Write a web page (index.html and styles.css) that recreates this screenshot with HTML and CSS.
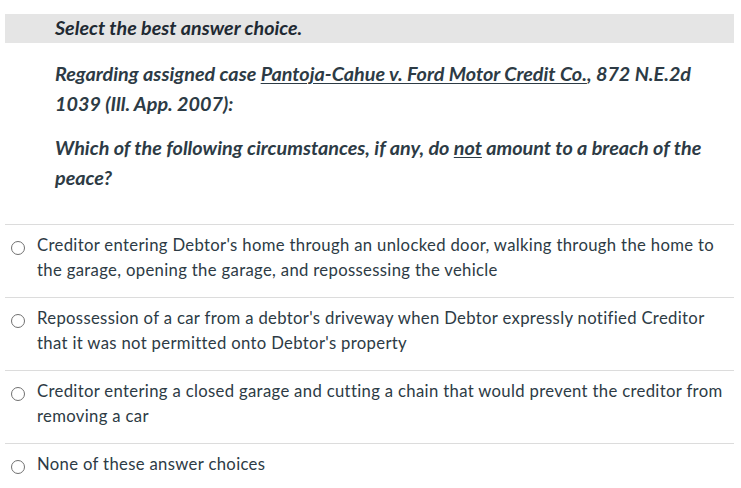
FILE: index.html
```html
<!DOCTYPE html>
<html lang="en">
<head>
<meta charset="utf-8">
<title>Question</title>
<link rel="stylesheet" href="styles.css">
</head>
<body>
<div class="page">
  <div class="instruction">Select the best answer choice.</div>
  <div class="question">
    <p>Regarding assigned case <u>Pantoja-Cahue v. Ford Motor Credit Co.</u>, 872 N.E.2d 1039 (Ill. App. 2007):</p>
    <p>Which of the following circumstances, if any, do <u>not</u> amount to a breach of the peace?</p>
  </div>
  <ul class="choices">
    <li class="choice"><span class="radio"></span><span class="label">Creditor entering Debtor's home through an unlocked door, walking through the home to the garage, opening the garage, and repossessing the vehicle</span></li>
    <li class="choice"><span class="radio"></span><span class="label">Repossession of a car from a debtor's driveway when Debtor expressly notified Creditor that it was not permitted onto Debtor's property</span></li>
    <li class="choice"><span class="radio"></span><span class="label">Creditor entering a closed garage and cutting a chain that would prevent the creditor from removing a car</span></li>
    <li class="choice"><span class="radio"></span><span class="label">None of these answer choices</span></li>
  </ul>
</div>
</body>
</html>
```

FILE: styles.css
```css
html, body {
  margin: 0;
  padding: 0;
  background: #ffffff;
}
body {
  font-family: Lato, "Noto Sans", sans-serif;
  color: #2d3b45;
}
.page {
  padding: 14px 7px 0 5px;
}
.instruction {
  background: #e5e5e5;
  height: 27px;
  line-height: 27px;
  padding: 0 0 2px 50px;
  font-size: 19.7px;
  font-weight: 700;
  font-style: italic;
  color: #1f2a33;
}
.question {
  padding: 15px 20px 0 50px;
  margin-bottom: 32px;
}
.question p {
  margin: 0 0 14px;
  font-size: 19.8px;
  line-height: 30px;
  font-weight: 700;
  font-style: italic;
}
.question p:last-child {
  margin-bottom: 0;
}
.question u {
  text-decoration-thickness: 1px;
  text-underline-offset: 2px;
}
.choices {
  list-style: none;
  margin: 0;
  padding: 0;
}
.choice {
  display: flex;
  align-items: flex-start;
  gap: 12px;
  border-top: 1px solid #dcdcdc;
  padding: 8px 0 14px 6px;
  font-size: 16.7px;
  letter-spacing: 0.33px;
  line-height: 25px;
}
.radio {
  flex: none;
  width: 12px;
  height: 12px;
  border: 1px solid #707070;
  border-radius: 50%;
  margin-top: 8px;
  background: #fff;
}
.label {
  flex: 1;
}
```
